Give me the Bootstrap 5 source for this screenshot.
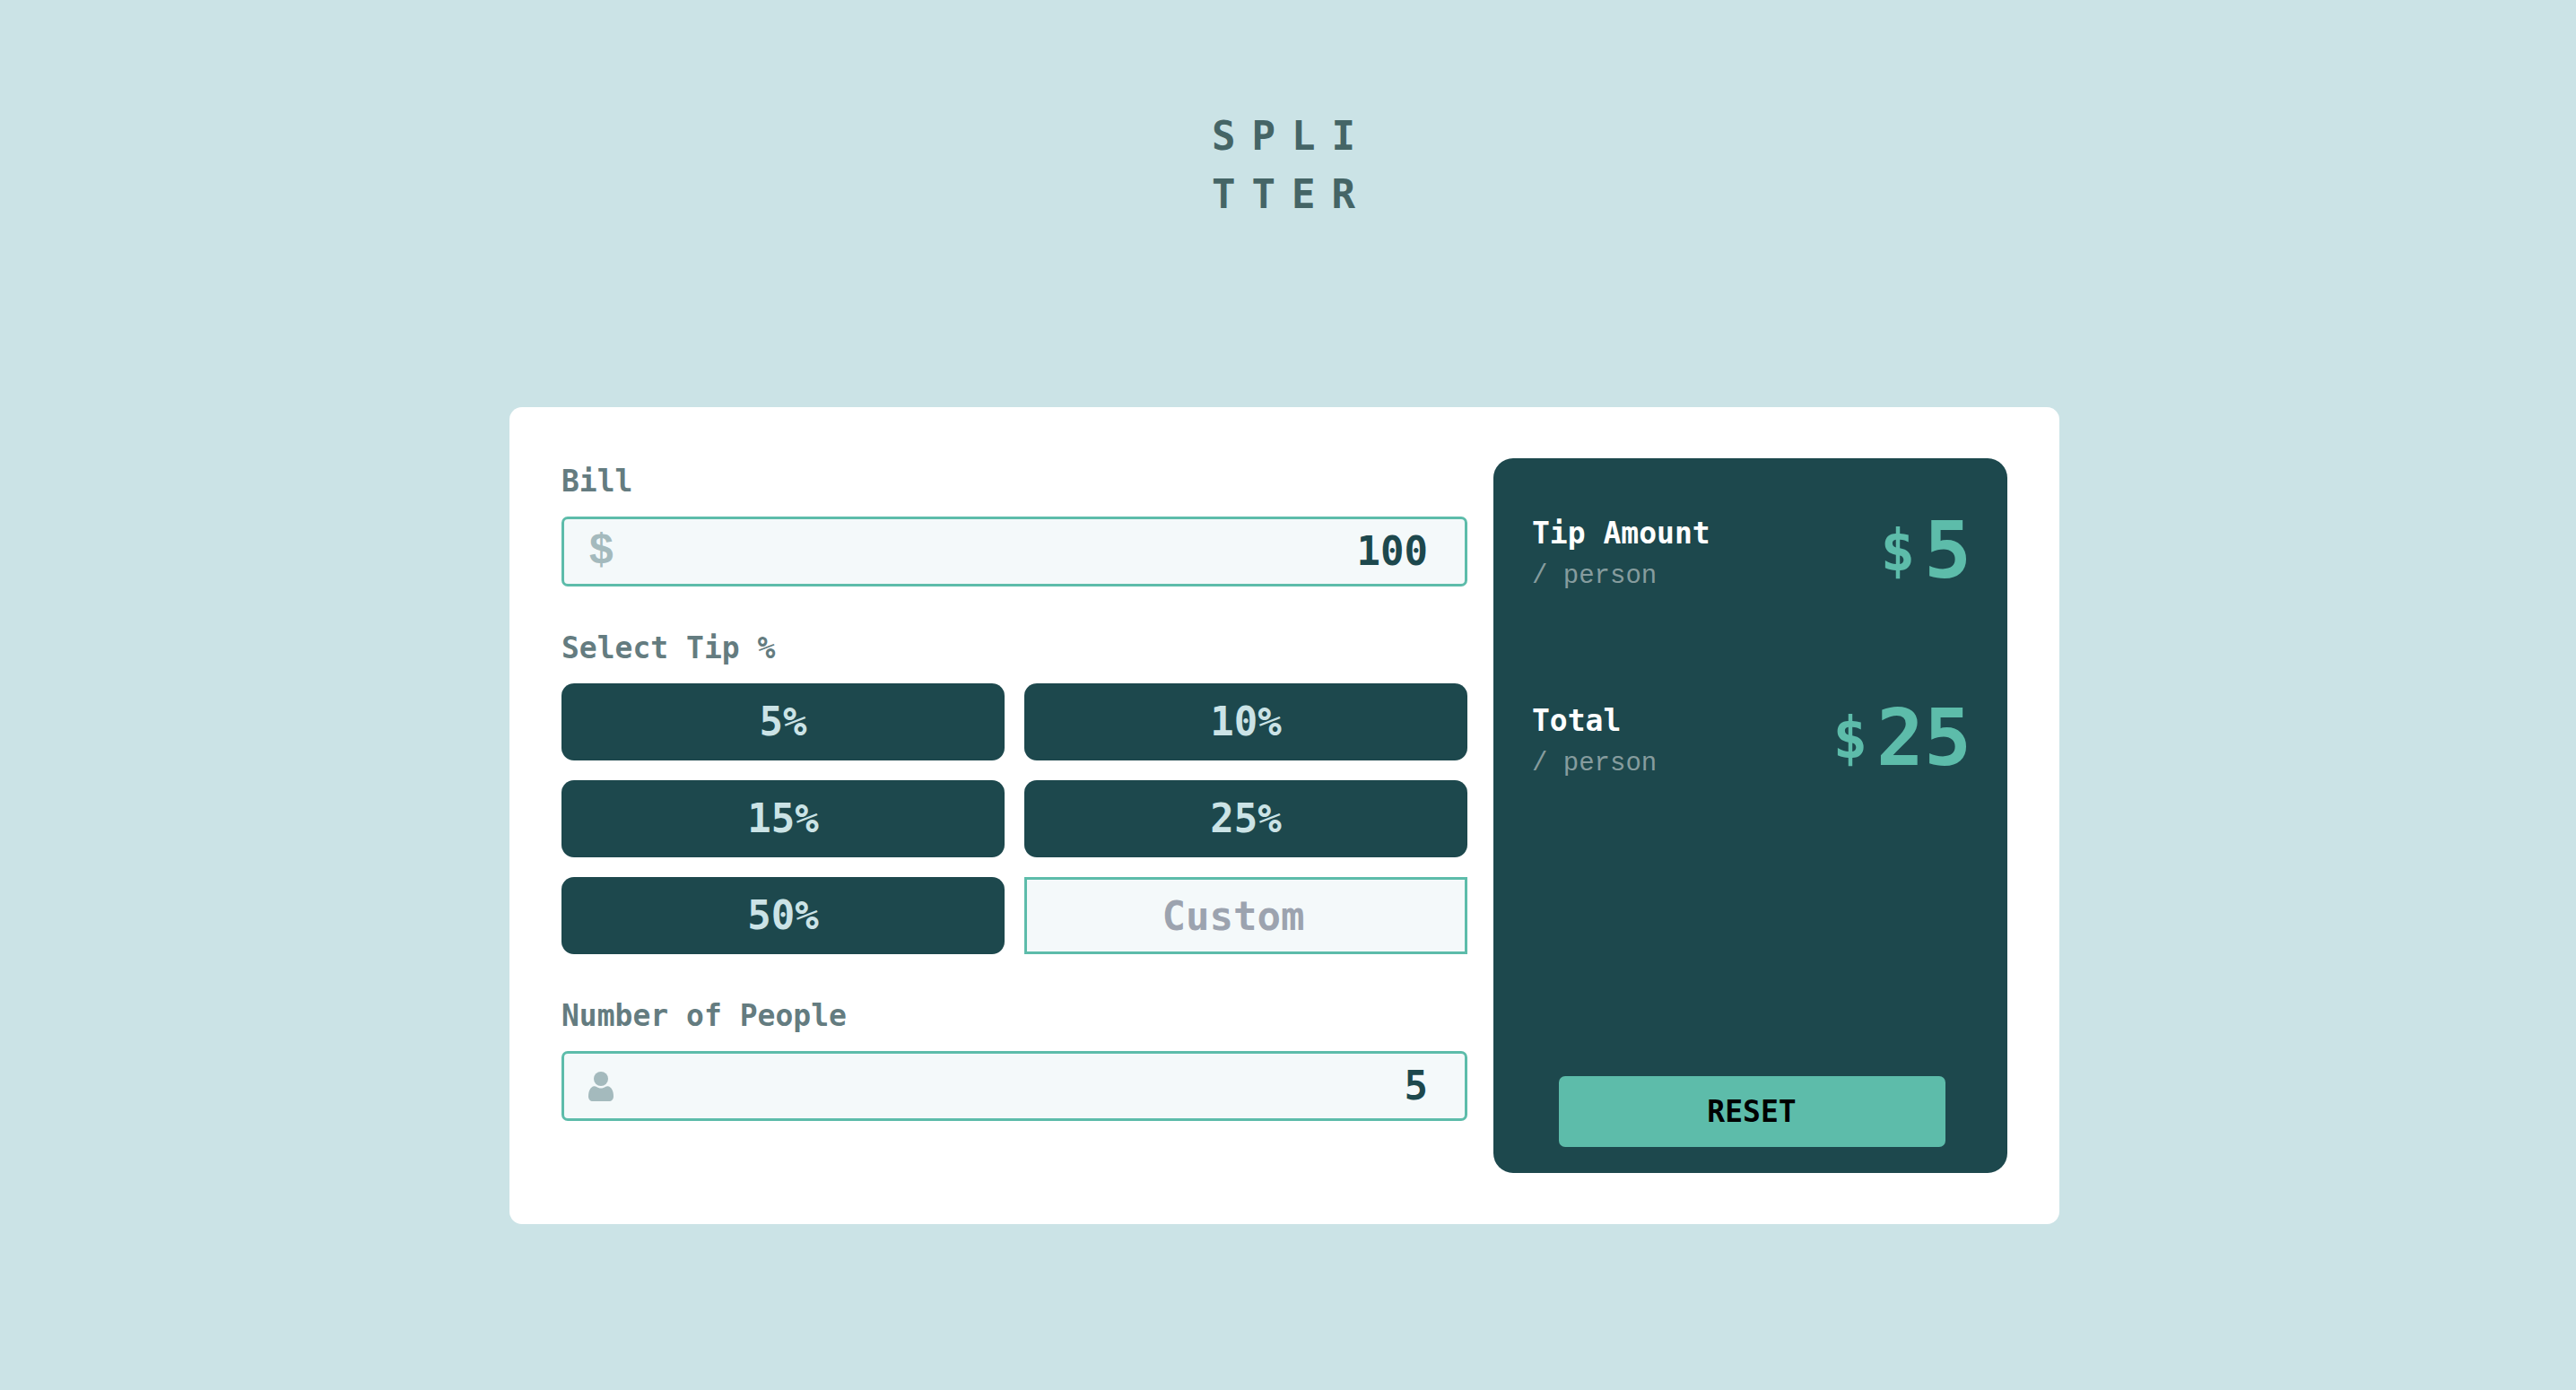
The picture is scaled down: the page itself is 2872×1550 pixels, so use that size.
<!DOCTYPE html>
<html lang="en">
<head>
<meta charset="utf-8">
<meta name="viewport" content="width=device-width, initial-scale=1">
<title>Splitter</title>
<link href="https://cdn.jsdelivr.net/npm/bootstrap@5.3.0/dist/css/bootstrap.min.css" rel="stylesheet">
<style>
:root { --ink: #1d484d; --mint: #5dbcaa; --pale: #cbe3e6; --field: #f4f9fa; --icon: #a4babd; }
body { background: var(--pale); color: var(--ink); font-family: "DejaVu Sans Mono", "Liberation Mono", monospace; font-weight: 700; font-size: 33px; }
.brand { font-size: 44px; line-height: 65px; letter-spacing: 18px; color: #456566; padding-top: 119px; margin-bottom: 205px; }
.calc { max-width: 1728px; border-radius: 14px; padding: 57px 58px; gap: 29px; }
.entry { flex: 1 1 1010px; gap: 43px; padding-bottom: 58px; min-width: 0; }
.result { flex: 0 1 573px; background: var(--ink); border-radius: 22px; padding: 59px 40px 29px 43px; }
.caption { display: block; float: none; width: auto; font-size: 33px; line-height: 52px; margin-bottom: 13px; color: #647c80; }
.field { background: var(--field); border: 3px solid var(--mint); border-radius: 7px; height: 78px; padding: 0 41px 0 27px; }
.field-input { border: 0; background: transparent; min-width: 0; outline: 0; font-weight: 700; font-size: 44px; color: var(--ink); text-align: right; padding: 0; }
.sign { width: 32px; font-family: "Liberation Mono", monospace; font-size: 48px; line-height: 72px; color: var(--icon); }
.tips { display: grid; grid-template-columns: 1fr 1fr; gap: 22px; }
.tip { height: 86px; font-size: 44px; font-weight: 700; line-height: 1; border-radius: 14px; }
button.tip { background: var(--ink); color: var(--pale); padding: 0; }
button.tip:hover, button.tip:active { background: var(--mint) !important; color: var(--ink) !important; }
input.tip { width: 100%; min-width: 0; border: 3px solid var(--mint); border-radius: 0; background: var(--field); text-align: center; color: var(--ink); padding: 0 28px 0 0; }
input.tip::placeholder { color: #9ca3af; opacity: 1; }
.lines { gap: 113px; }
.what { line-height: 50px; }
.per { font-family: "Liberation Mono", monospace; font-weight: 400; font-size: 29px; line-height: 46px; color: #869c9e; }
.sum { font-size: 88px; line-height: 88px; color: var(--mint); gap: 10px; }
.coin { font-size: 64px; }
.reset { width: 431px; max-width: 100%; height: 79px; background: var(--mint); color: #000; border-radius: 7px; font-size: 33px; font-weight: 700; }
</style>
<script src="https://cdn.jsdelivr.net/npm/bootstrap@5.3.0/dist/js/bootstrap.bundle.min.js"></script>
</head>
<body>
<header class="ps-2 d-flex justify-content-center">
  <h1 class="brand fw-bold">SPLI<br>TTER</h1>
</header>
<main class="pe-2">
  <div class="calc bg-white mx-auto d-flex">
    <form class="entry d-flex flex-column">
      <div>
        <label class="caption" for="bill">Bill</label>
        <div class="field d-flex align-items-center">
          <span class="sign">$</span>
          <input class="field-input flex-grow-1" id="bill" type="text" inputmode="decimal" value="100">
        </div>
      </div>
      <fieldset>
        <legend class="caption">Select Tip %</legend>
        <div class="tips">
          <button class="btn border-0 tip" type="button">5%</button>
          <button class="btn border-0 tip" type="button">10%</button>
          <button class="btn border-0 tip" type="button">15%</button>
          <button class="btn border-0 tip" type="button">25%</button>
          <button class="btn border-0 tip" type="button">50%</button>
          <input class="tip" type="text" inputmode="decimal" placeholder="Custom" aria-label="Custom tip">
        </div>
      </fieldset>
      <div>
        <label class="caption" for="people">Number of People</label>
        <div class="field d-flex align-items-center">
          <svg class="flex-shrink-0" width="28" height="33" viewBox="0 0 28 33" fill="#a4babd" aria-hidden="true">
            <circle cx="14" cy="8" r="8"/>
            <path d="M6 16.200C7 16 8 16.200 8.800 16.800C10.300 18 12.100 18.600 14 18.600C15.900 18.600 17.700 18 19.200 16.800C20 16.200 21 16 22 16.200C26 17.500 28 21.500 28 27.500C28 31 26 33 23 33H5C2 33 0 31 0 27.500C0 21.500 2 17.500 6 16.200Z"/>
          </svg>
          <input class="field-input flex-grow-1" id="people" type="text" inputmode="numeric" value="5">
        </div>
      </div>
    </form>
    <section class="result d-flex flex-column justify-content-between">
      <div class="lines d-flex flex-column">
        <div class="d-flex justify-content-between align-items-start">
          <div><div class="what text-white">Tip Amount</div><div class="per">/ person</div></div>
          <div class="sum d-flex"><span class="coin">$</span><span>5</span></div>
        </div>
        <div class="d-flex justify-content-between align-items-start">
          <div><div class="what text-white">Total</div><div class="per">/ person</div></div>
          <div class="sum d-flex"><span class="coin">$</span><span>25</span></div>
        </div>
      </div>
      <button class="btn border-0 reset mx-auto" type="button">RESET</button>
    </section>
  </div>
</main>
</body>
</html>
